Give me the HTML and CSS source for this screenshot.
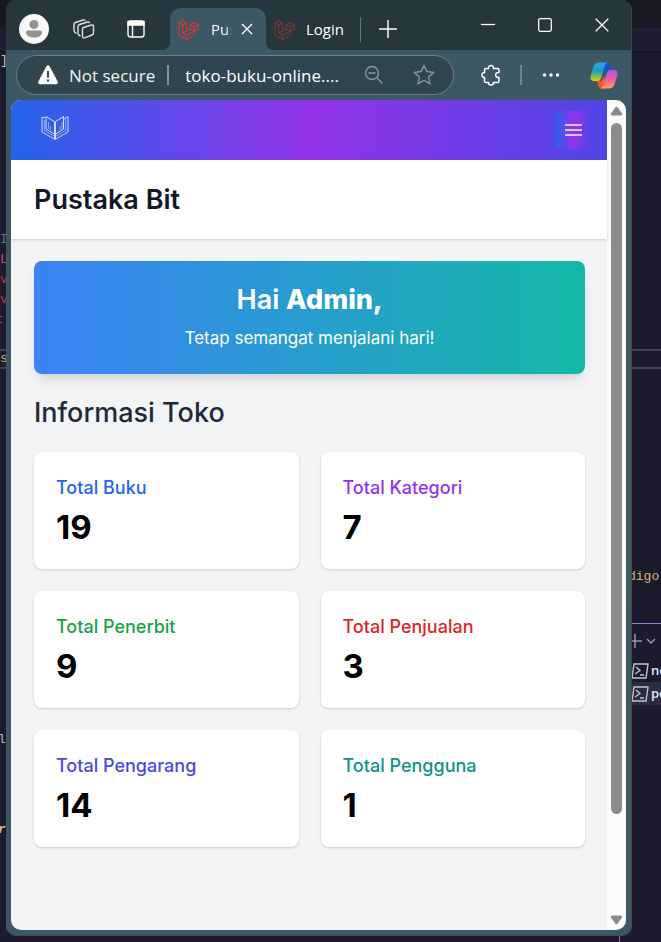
FILE: index.html
```html
<!DOCTYPE html>
<html lang="id">
<head>
<meta charset="utf-8">
<title>Pustaka Bit</title>
<link rel="stylesheet" href="styles.css">
</head>
<body>
<svg class="defs" aria-hidden="true">
  <symbol id="laravel" viewBox="0 0 20 20">
    <path d="M1 3.500 4.500 1.500 8 3.500V11.500L11.500 9.500V5.500L15.500 3.500 19.200 5.500V9.500L15.500 11.500V15.500L8 19.500 1 15.500ZM1 3.500 4.500 5.500 8 3.500M4.500 5.500V13.500L8 15.500 15.500 11.500 11.500 9.500M8 11.500 4.500 13.500M8 15.500V19.500M11.500 5.500 15.500 7.500 19.200 5.500M15.500 7.500V11.500"/>
  </symbol>
</svg>
<div class="desktop">
  <div class="editor editor-left" aria-hidden="true">
    <span class="code bracket">]</span>
    <span class="code c-blue">I</span>
    <span class="code c-pink">L</span>
    <span class="code c-red1">v</span>
    <span class="code c-red2">v</span>
    <span class="code c-red3">t-</span>
    <span class="code c-sand">s</span>
    <span class="code c-sky">l,</span>
    <span class="code c-italic">r</span>
  </div>

  <div class="window">
    <header class="titlebar">
      <button class="avatar" aria-label="Profile"><svg viewBox="0 0 30 30"><circle cx="15" cy="10.500" r="4.500"/><path d="M9 16.500h12q2 0 2 1.500c0 4-4 5.500-8 5.500s-8-1.500-8-5.500q0-1.500 2-1.500z"/></svg></button>
      <button class="icon workspaces" aria-label="Workspaces"><svg viewBox="0 0 22 22"><path d="M10.500 9.500 18.500 7Q20.500 6.600 20.500 8.500V15Q20.500 16.500 19 17L11.500 19.800Q9.500 20.300 9.500 18.500V11Q9.500 9.900 10.500 9.500ZM7.500 18 6.500 17.500Q5 16.800 5 15V8.500Q5 7 6.500 6.500L14.500 4Q16 3.700 16.800 5M3.500 15.500 2.500 14.900Q1 14 1 12V6.500Q1 5 2.500 4.500L10 2Q11.500 1.600 12.300 2.800"/></svg></button>
      <button class="icon tabs-menu" aria-label="Tab actions"><svg viewBox="0 0 18 18"><rect x="1" y="1" width="16" height="16" rx="2.500"/><path d="M5.500 5V17"/><path class="solid" d="M1 1.500h16V5H1z"/></svg></button>
      <div class="tab active">
        <svg class="favicon" viewBox="0 0 20 20"><use href="#laravel"/></svg>
        <span class="tab-title">Pus</span>
        <button class="icon tab-close" aria-label="Close tab"><svg viewBox="0 0 12 12"><path d="M1 1 11 11M11 1 1 11"/></svg></button>
      </div>
      <div class="tab">
        <svg class="favicon" viewBox="0 0 20 20"><use href="#laravel"/></svg>
        <span>Login</span>
      </div>
      <i class="divider"></i>
      <button class="icon new-tab" aria-label="New tab"><svg viewBox="0 0 18 18"><path d="M9 0V18M0 9H18"/></svg></button>
      <div class="controls">
        <button class="icon" aria-label="Minimize"><svg viewBox="0 0 14 14"><path d="M0 6.500H14"/></svg></button>
        <button class="icon" aria-label="Maximize"><svg viewBox="0 0 14 14"><rect x=".7" y=".7" width="12.600" height="12.600" rx="1.500"/></svg></button>
        <button class="icon" aria-label="Close"><svg viewBox="0 0 14 14"><path d="M.7.7 13.300 13.300M13.300.7.7 13.300"/></svg></button>
      </div>
    </header>

    <div class="toolbar">
      <div class="address">
        <svg class="warning" viewBox="0 0 22 20"><path d="M9.300 1.500Q11-.8 12.700 1.500L20.700 16.500Q21.600 19 19.200 19.200H2.800Q.4 19 1.300 16.500Z"/><path class="mark" d="M11 6V12.500M11 14.500V16.500"/></svg>
        <span class="security">Not secure</span>
        <i class="divider"></i>
        <span class="url">toko-buku-online....</span>
        <button class="icon zoom-out" aria-label="Zoom"><svg viewBox="0 0 20 20"><circle cx="8" cy="8" r="6.500"/><path d="M4.500 8H11.500M12.800 12.800 18.500 18.500"/></svg></button>
        <button class="icon star" aria-label="Add to favorites"><svg viewBox="0 0 22 22"><path d="M11 1.500 13.900 7.500 20.500 8.400 15.700 13 16.900 19.700 11 16.500 5.100 19.700 6.300 13 1.500 8.400 8.100 7.500Z"/></svg></button>
      </div>
      <button class="icon extensions" aria-label="Extensions"><svg viewBox="0 0 22 22"><path d="M6 4.500H8.500C8 0.500 14 0.500 13.500 4.500H17.500Q19 4.500 19 6V8.500C14.500 8 14.500 14 19 13.500V17Q19 18.500 17.500 18.500H13.500C14 21.800 8 21.800 8.500 18.500H6Q4.500 18.500 4.500 17V13.500C1 14 1 8 4.500 8.500V6Q4.500 4.500 6 4.500Z"/></svg></button>
      <i class="divider"></i>
      <button class="icon more" aria-label="More"><svg viewBox="0 0 18 6"><circle cx="2.500" cy="3" r="1.700"/><circle cx="9" cy="3" r="1.700"/><circle cx="15.500" cy="3" r="1.700"/></svg></button>
      <button class="icon copilot" aria-label="Copilot"><svg viewBox="0 0 28 27">
        <defs>
          <linearGradient id="cool" x1="0" y1="0" x2="0" y2="1"><stop offset="0" stop-color="#22a9ee"/><stop offset=".45" stop-color="#2098c9"/><stop offset=".75" stop-color="#7dbd57"/><stop offset="1" stop-color="#f2ce16"/></linearGradient>
          <linearGradient id="warm" x1="0" y1="0" x2="0" y2="1"><stop offset="0" stop-color="#a957f0"/><stop offset=".5" stop-color="#e85b9b"/><stop offset="1" stop-color="#ffa25c"/></linearGradient>
        </defs>
        <path fill="#1650d8" d="M14 .5H17Q19.500.5 20.300 3.500L21.500 8H18Q15.500 8 14.700 11L13 12Z"/>
        <path fill="#f4532e" d="M7 19H10.500Q12.500 19 13.300 16L15 14V26.500H11.500Q9 26.500 8.200 23.500Z"/>
        <path fill="url(#cool)" d="M9 .5H17.500Q15.500 1 14.500 4.500L11.500 15Q10.300 19 7.500 19H4Q-.5 19 .7 13.500L3.500 4.500Q5 .5 9 .5Z"/>
        <path fill="url(#warm)" d="M19 26.500H10.500Q12.500 26 13.500 22.500L16.500 12Q17.700 8 20.500 8H24Q28.500 8 27.300 13.500L24.500 22.500Q23 26.500 19 26.500Z"/>
      </svg></button>
    </div>

    <div class="viewport">
      <div class="page">
        <nav class="navbar">
          <a class="logo" href="#" aria-label="Pustaka Bit"><svg viewBox="0 0 28 26"><path d="M4 2.500H1V17L14 24.500 27 17V1.500L23 4M14 7 5 1.500V14L14 19.500M13.500 7V24M14.500 7V24M14 7 22.500 1.500V14L14 19.500"/><path class="faint" d="M3.300 5V15.500L13 21M24.700 4V15.500L15 21M7.500 7V14M9.500 11V15M19 11V15M21 7V14"/></svg></a>
          <button class="menu" aria-label="Menu"><svg viewBox="0 0 18 14"><path d="M0 2H17M0 7H17M0 12H17"/></svg></button>
        </nav>
        <header class="page-header"><h1>Pustaka Bit</h1></header>
        <main>
          <section class="banner">
            <h2>Hai <b>Admin,</b></h2>
            <p>Tetap semangat menjalani hari!</p>
          </section>
          <h2 class="section-title">Informasi Toko</h2>
          <div class="cards">
            <article class="card"><h3 class="blue">Total Buku</h3><p>19</p></article>
            <article class="card"><h3 class="purple">Total Kategori</h3><p>7</p></article>
            <article class="card"><h3 class="green">Total Penerbit</h3><p>9</p></article>
            <article class="card"><h3 class="red">Total Penjualan</h3><p>3</p></article>
            <article class="card"><h3 class="indigo">Total Pengarang</h3><p>14</p></article>
            <article class="card"><h3 class="teal">Total Pengguna</h3><p>1</p></article>
          </div>
        </main>
      </div>
      <div class="scrollbar" aria-hidden="true">
        <svg viewBox="0 0 13 10"><path d="M5.300 1.300Q6.500 0 7.700 1.300L12 7.500Q12.800 9.500 11 9.500H2Q.2 9.500 1 7.500Z"/></svg>
        <div class="track"><div class="thumb"></div></div>
        <svg viewBox="0 0 13 10"><path d="M5.300 8.700Q6.500 10 7.700 8.700L12 2.500Q12.800.5 11 .5H2Q.2.5 1 2.500Z"/></svg>
      </div>
    </div>
  </div>

  <div class="editor editor-right" aria-hidden="true">
    <span class="code c-digo">digo-</span>
    <div class="panel">
      <div class="panel-actions"><svg viewBox="0 0 30 14"><path d="M3 0V14M-3 7H10M15 5 19 9 23 5"/></svg></div>
      <div class="terminal"><svg viewBox="0 0 18 16"><path d="M2 1H16L14 15H0ZM4 4 8 7.500 3 11M8 12H12"/></svg><span>no</span></div>
      <div class="terminal selected"><svg viewBox="0 0 18 16"><path d="M2 1H16L14 15H0ZM4 4 8 7.500 3 11M8 12H12"/></svg><span>po</span></div>
    </div>
  </div>
</div>
</body>
</html>
```

FILE: styles.css
```css
*, *::before, *::after { box-sizing: border-box; }
body, h1, h2, h3, p { margin: 0; }
body { background: #1b1b2d; font-family: "Inter", sans-serif; overflow: hidden; }
button { padding: 0; border: 0; background: none; color: inherit; font: inherit; }
svg { display: block; fill: none; stroke: currentColor; }
.defs { position: absolute; width: 0; height: 0; }

.desktop {
  position: relative;
  display: flex;
  min-height: 100vh;
  padding-bottom: 6px;
  background: linear-gradient(#181822 28px, #1e1d32 28px 51px, #14141f 51px 52px, #1b1b2d 52px);
}
.desktop::after {
  content: "";
  position: absolute;
  right: 41px;
  bottom: 0;
  width: 1px;
  height: 6px;
  background: #8b6fb0;
}

/* Code editor showing behind the browser window */
.editor { position: relative; flex: none; overflow: hidden; }
.editor::before {
  content: "";
  position: absolute;
  top: 349px;
  left: 0;
  right: 0;
  height: 20px;
  border: solid #414153;
  border-width: 2px 0;
}
.editor-left { width: 6px; }
.editor-right { width: 29px; }
.code {
  position: absolute;
  left: 0;
  font: 13px/20px "Liberation Mono", monospace;
}
.bracket { top: 51px; color: #d8c08f; }
.c-blue { top: 230px; color: #5570ae; }
.c-pink { top: 250px; color: #d13f72; }
.c-red1 { top: 270px; color: #c92f52; }
.c-red2 { top: 290px; color: #c92f52; }
.c-red3 { top: 310px; left: -4px; color: #c93540; }
.c-sand { top: 349px; color: #d3ad72; }
.c-sky { top: 730px; left: -2px; color: #a9c4dc; }
.c-italic { top: 820px; left: -2px; color: #c9b79d; font-style: italic; font-weight: 700; }
.c-digo { top: 567px; left: -4px; color: #dcb27a; }

.panel {
  position: absolute;
  top: 623px;
  left: 0;
  right: 0;
  border-top: 1px solid #9a7cc9;
  color: #e6e6ea;
  font: 13px/23px "Open Sans", sans-serif;
}
.panel-actions { padding: 10px 0 11px; color: #9b9ba8; }
.panel-actions svg { width: 30px; height: 14px; stroke-width: 1.5; }
.terminal { display: flex; align-items: center; gap: 1px; height: 23px; font-weight: 600; }
.terminal svg { flex: none; width: 18px; height: 16px; stroke-width: 1.4; color: #c4c4c8; }
.terminal.selected { background: #2b2c40; }

/* Browser window */
.window {
  flex: 1;
  min-width: 0;
  display: flex;
  flex-direction: column;
  padding-bottom: 5px;
  border: solid #3f4b53;
  border-width: 0 1px 1px 0;
  border-radius: 10px;
  background: #3c5862;
  color: #fff;
  font-family: "Open Sans", sans-serif;
  overflow: hidden;
}
.icon, .icon svg { flex: none; display: block; }
.titlebar {
  display: flex;
  align-items: center;
  height: 50px;
  padding: 8px 0 0 13px;
  background: #26363d;
  font-size: 15px;
}
.avatar { width: 30px; height: 30px; border-radius: 50%; background: #f7f7f7; color: #929292; }
.avatar svg { fill: currentColor; stroke: none; }
.workspaces { margin-left: 24px; color: #dbe0e2; }
.workspaces svg { width: 22px; height: 22px; stroke-width: 1.4; }
.tabs-menu { margin-left: 32px; }
.tabs-menu svg { width: 18px; height: 18px; stroke-width: 1.4; }
.solid { fill: currentColor; }
.tab { display: flex; align-items: center; height: 42px; padding: 0 8px; }
.tab.active {
  position: relative;
  width: 96px;
  margin-left: 25px;
  border-radius: 11px 11px 0 0;
  background: #3c5862;
}
.tab.active::before, .tab.active::after {
  content: "";
  position: absolute;
  bottom: 0;
  width: 8px;
  height: 8px;
}
.tab.active::before { left: -8px; background: radial-gradient(circle at 0 0, transparent 8px, #3c5862 8px); }
.tab.active::after { right: -8px; background: radial-gradient(circle at 100% 0, transparent 8px, #3c5862 8px); }
.favicon { flex: none; width: 21px; height: 21px; margin-right: 12px; color: #e03530; }
.tab:not(.active) .favicon { color: #7d3436; margin-right: 11px; }
.tab-title {
  width: 20px;
  margin-right: 10px;
  overflow: hidden;
  -webkit-mask-image: linear-gradient(90deg, #000 15px, transparent 21px);
  mask-image: linear-gradient(90deg, #000 15px, transparent 21px);
}
.tab-close svg { width: 12px; height: 12px; stroke-width: 1.4; }
.divider { flex: none; width: 2px; height: 20px; background: #83939a; }
.titlebar .divider { width: 1px; height: 25px; margin-left: 8px; background: #67757b; }
.new-tab { margin-left: 18px; }
.new-tab svg { width: 18px; height: 18px; stroke-width: 1.4; }
.controls { display: flex; gap: 43px; margin: 0 22px 8px auto; }
.controls svg { width: 14px; height: 14px; stroke-width: 1.3; }

.toolbar { display: flex; align-items: center; height: 50px; padding: 0 13px 0 10px; }
.address {
  flex: 1;
  min-width: 0;
  display: flex;
  align-items: center;
  height: 40px;
  padding: 0 18px 0 20px;
  border: 1px solid #6c8087;
  border-radius: 20px;
  background: #30454d;
  font-size: 17px;
}
.warning { flex: none; width: 22px; height: 20px; margin-right: 10px; fill: #fff; stroke: none; }
.warning .mark { stroke: #30454d; stroke-width: 2; }
.security { color: #f0f2f3; white-space: nowrap; }
.address .divider { margin: 0 16px 0 12px; }
.url { flex: 1; white-space: nowrap; }
.zoom-out, .star { color: #8d989c; }
.zoom-out svg { width: 20px; height: 20px; stroke-width: 1.4; }
.star { margin-left: 29px; }
.star svg { width: 22px; height: 22px; stroke-width: 1.4; }
.extensions { margin-left: 26px; }
.extensions svg { width: 22px; height: 22px; stroke-width: 1.5; }
.toolbar > .divider { margin: 0 20px 0 18px; background: #70868e; }
.more svg { width: 18px; height: 6px; fill: currentColor; stroke: none; }
.copilot { margin-left: 30px; }
.copilot svg { width: 28px; height: 27px; stroke: none; }

/* Web page */
.viewport {
  flex: 1;
  display: flex;
  margin: 0 5px;
  border-radius: 10px;
  overflow: hidden;
}
.page { flex: 1; min-width: 0; background: #f3f4f6; color: #000; font-family: "Inter", sans-serif; }
.navbar {
  display: flex;
  align-items: center;
  justify-content: space-between;
  height: 60px;
  padding: 0 15px 0 30px;
  background: linear-gradient(90deg, #2563eb, #9333ea, #4f46e5);
}
.logo { padding-bottom: 5px; color: #d3dbff; }
.logo svg { width: 28px; height: 26px; stroke-width: 1; }
.faint { opacity: .6; }
.menu {
  display: grid;
  place-items: center;
  width: 37px;
  height: 38px;
  border-radius: 5px;
  background: linear-gradient(90deg, #2563eb, #9333ea, #4f46e5);
  color: #f6effb;
}
.menu svg { width: 18px; height: 14px; stroke-width: 1.4; }
.page-header {
  position: relative;
  padding: 22px 23px;
  background: #fff;
  box-shadow: 0 1px 3px rgba(0, 0, 0, .18);
}
h1 { color: #111827; font-size: 27px; line-height: 35px; font-weight: 600; }
main { padding: 22px 22px 22px 23px; }
.banner {
  padding: 22px;
  border-radius: 8px;
  background: linear-gradient(90deg, #3b82f6, #14b8a6);
  box-shadow: 0 9px 14px -3px rgba(0, 0, 0, .1), 0 4px 6px -4px rgba(0, 0, 0, .1);
  color: #fff;
  text-align: center;
}
.banner h2 { font-size: 27px; line-height: 34px; font-weight: 600; }
.banner b { font-weight: 800; }
.banner p { margin-top: 8px; font-size: 17px; line-height: 27px; }
.section-title { margin: 22px 0; color: #1f2937; font-size: 27px; line-height: 34px; font-weight: 500; }
.cards { display: grid; grid-template-columns: 1fr 1fr; gap: 22px; }
.card {
  padding: 22px;
  border-radius: 8px;
  background: #fff;
  box-shadow: 0 1px 3px rgba(0, 0, 0, .1), 0 1px 2px rgba(0, 0, 0, .08);
}
.card h3 { font-size: 18px; line-height: 28px; font-weight: 500; }
.card p { margin-top: 6px; font-size: 33px; line-height: 39px; font-weight: 700; }
.blue { color: #2563eb; }
.purple { color: #9333ea; }
.green { color: #16a34a; }
.red { color: #dc2626; }
.indigo { color: #4f46e5; }
.teal { color: #0d9488; }

.scrollbar {
  display: flex;
  flex-direction: column;
  align-items: center;
  width: 19px;
  padding: 6px 0 5px;
  background: #fcfcfc;
  color: #8b8b8b;
}
.scrollbar svg { width: 13px; height: 10px; fill: currentColor; stroke: none; }
.track { flex: 1; width: 11px; padding: 7px 0; }
.thumb { height: 88%; border-radius: 6px; background: #8b8b8b; }
```
